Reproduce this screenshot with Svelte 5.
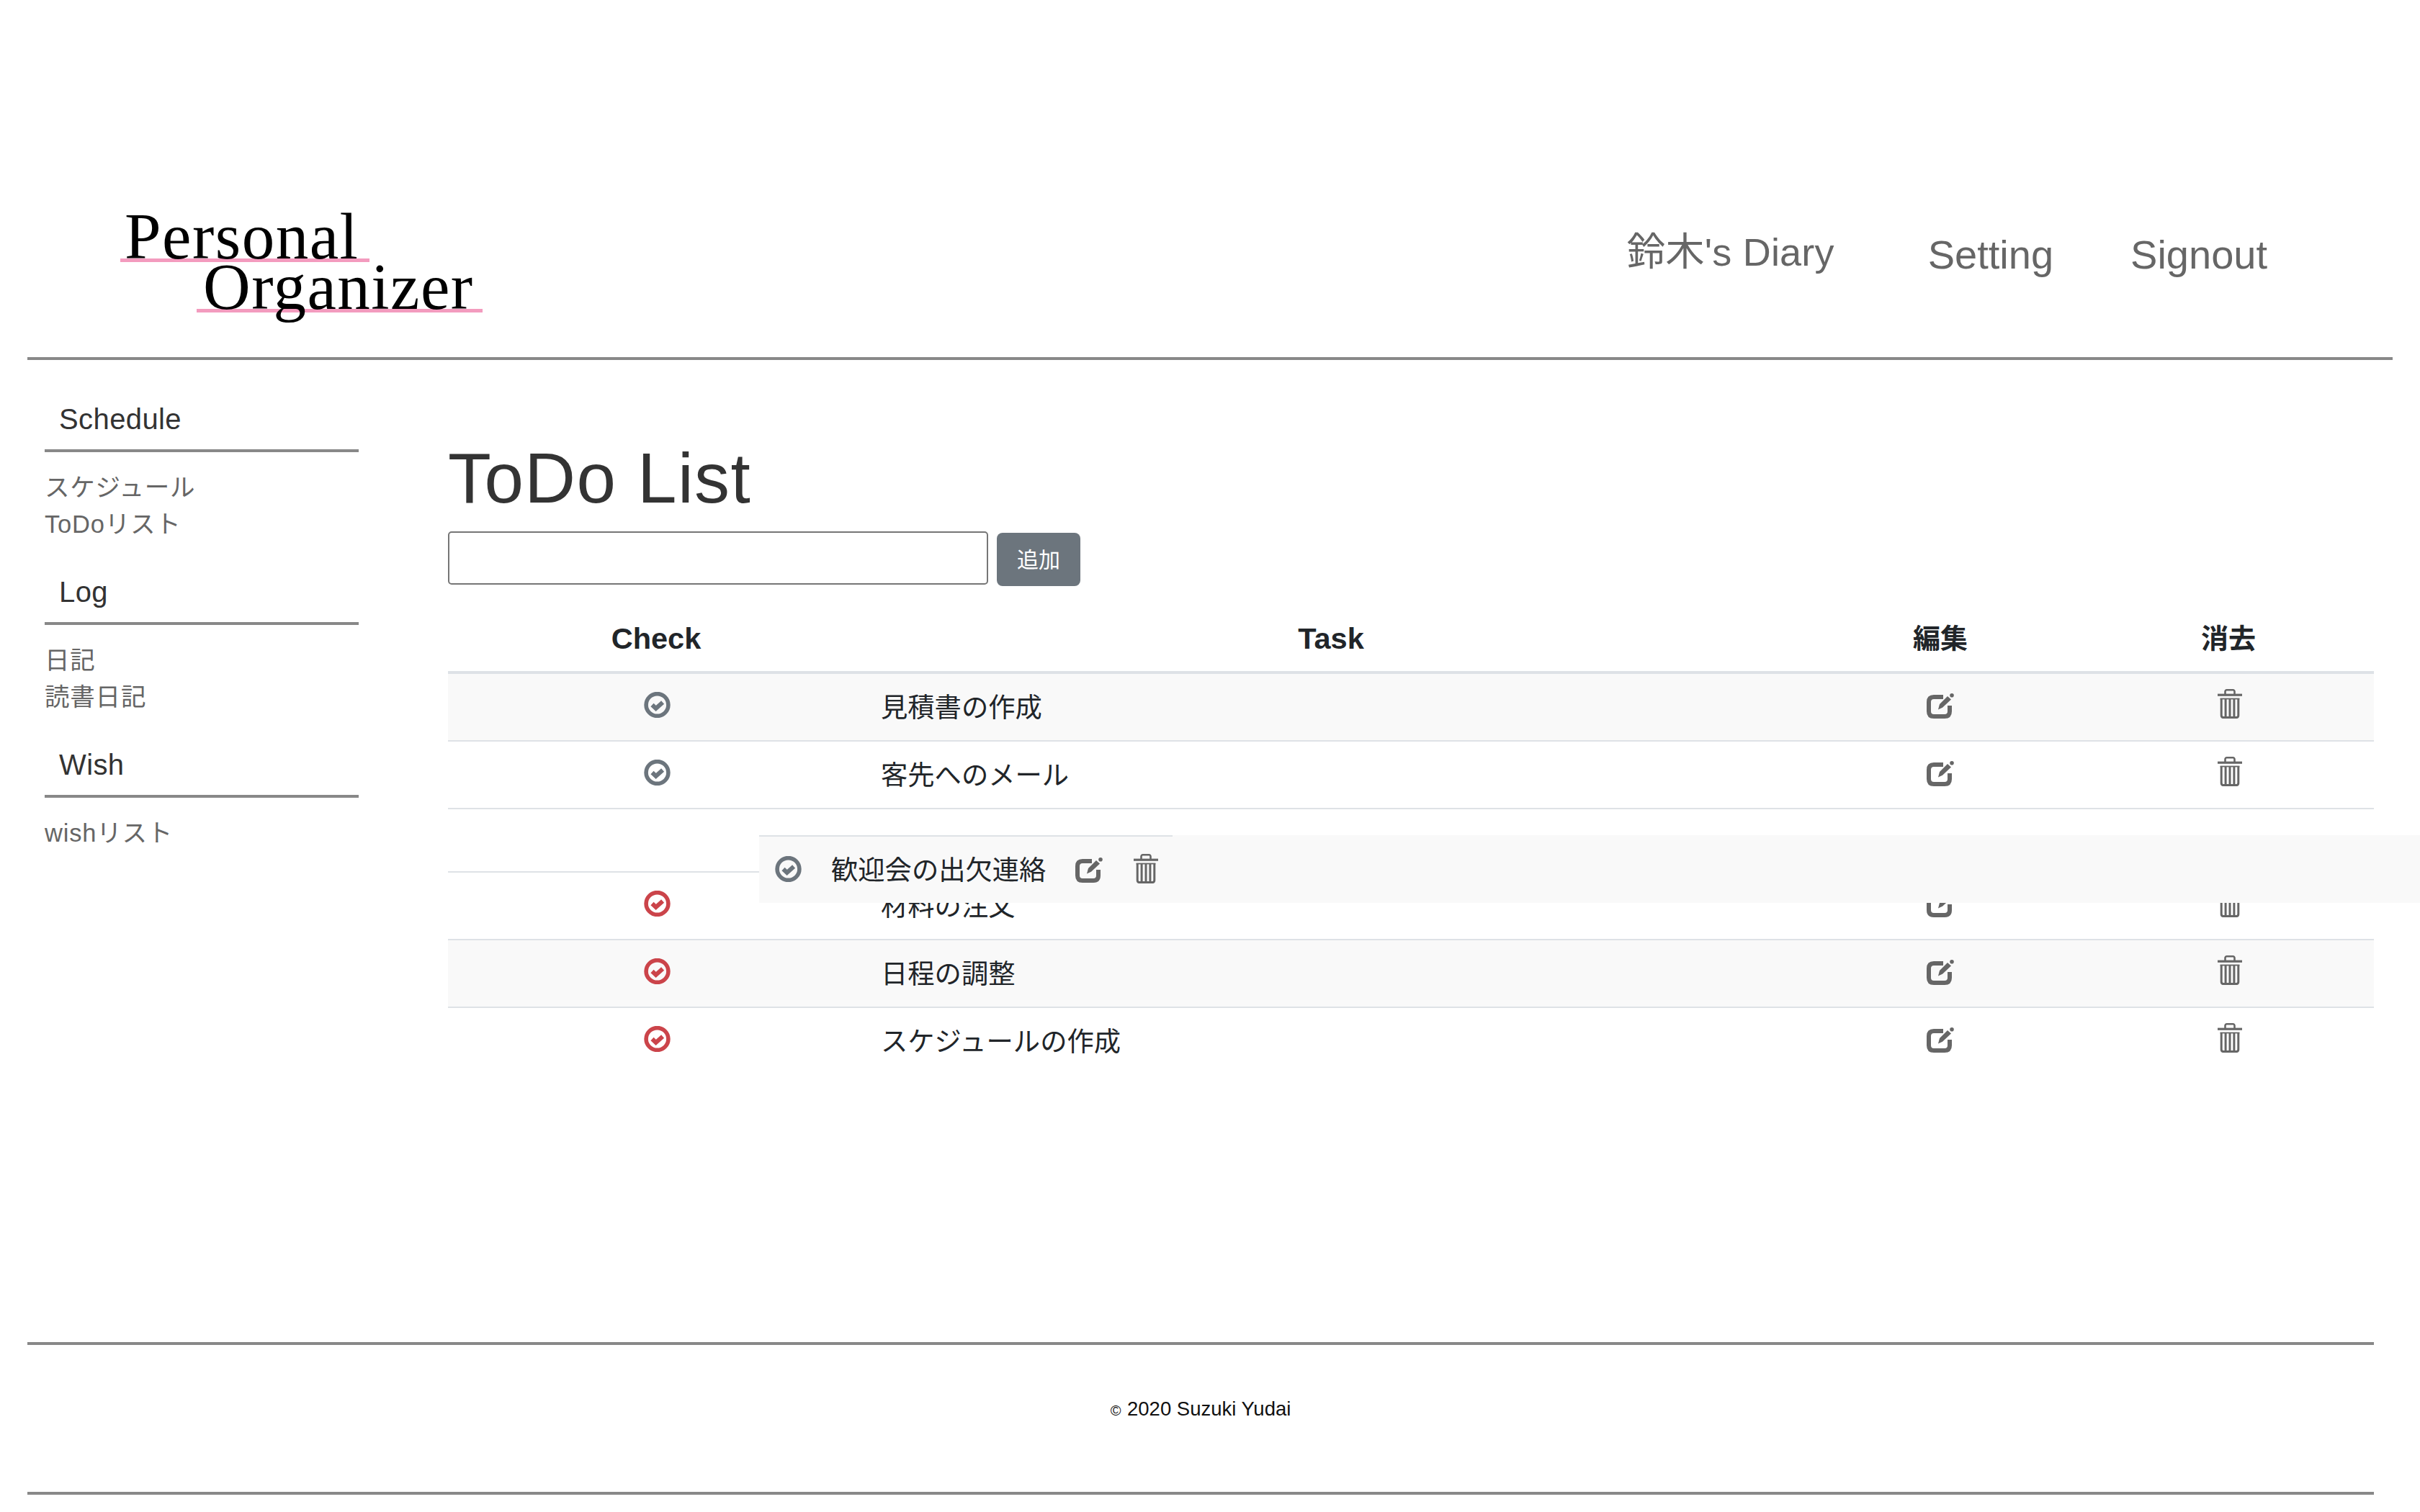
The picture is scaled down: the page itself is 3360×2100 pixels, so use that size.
<script>
  const rows = [
    { task: "見積書の作成", done: false, striped: true },
    { task: "客先へのメール", done: false, striped: false },
    { placeholder: true },
    { task: "材料の注文", done: true, striped: false },
    { task: "日程の調整", done: true, striped: true },
    { task: "スケジュールの作成", done: true, striped: false },
  ];

  const menu = [
    { title: "Schedule", links: ["スケジュール", "ToDoリスト"] },
    { title: "Log", links: ["日記", "読書日記"] },
    { title: "Wish", links: ["wishリスト"] },
  ];
</script>

{#snippet checkIcon(done)}
  <svg class="icon check" class:done viewBox="0 0 37 36" width="37" height="36">
    <circle cx="18.5" cy="18" r="15.4" fill="none" stroke="currentColor" stroke-width="5.6" />
    <path d="M11.5 18l5.2 5 9.4-8.4" fill="none" stroke="currentColor" stroke-width="6" />
  </svg>
{/snippet}

{#snippet editIcon()}
  <svg class="icon edit" viewBox="0 0 38 35" width="38" height="35">
    <path d="M23 5H10Q3 5 3 12V25Q3 32 10 32H25Q32 32 32 25V17" fill="none" stroke="currentColor" stroke-width="6" />
    <path d="M16 22.5l2-7.5L29 4l5 4.6L22 19.8z" fill="currentColor" />
    <circle cx="35" cy="2.8" r="2.8" fill="currentColor" />
  </svg>
{/snippet}

{#snippet trashIcon()}
  <svg class="icon trash" viewBox="0 0 34 41" width="34" height="41">
    <path d="M10.5 7.5V3.5a2.2 2.2 0 0 1 2.2-2.2h8.6a2.2 2.2 0 0 1 2.2 2.2v4" fill="none" stroke="currentColor" stroke-width="2.6" />
    <rect x="0" y="6.6" width="34" height="3.2" fill="currentColor" />
    <path d="M5.2 13v23.6q0 3 3 3h17.6q3 0 3-3V13M11.1 13v26M17 13v26M22.9 13v26" fill="none" stroke="currentColor" stroke-width="3" />
    <rect x="3.6" y="12.6" width="26.8" height="1.8" fill="currentColor" />
  </svg>
{/snippet}

<div class="page">
  <header>
    <div class="logo">
      <span class="first">Personal</span>
      <span class="second">Organizer</span>
    </div>
    <nav>
      <a class="diary" href="#diary">鈴木's Diary</a>
      <a class="setting" href="#setting">Setting</a>
      <a class="signout" href="#signout">Signout</a>
    </nav>
  </header>

  <main>
    <aside>
      {#each menu as section}
        <section>
          <h2>{section.title}</h2>
          <ul>
            {#each section.links as link}
              <li><a href="#link">{link}</a></li>
            {/each}
          </ul>
        </section>
      {/each}
    </aside>

    <div class="content">
      <h1>ToDo List</h1>
      <form>
        <input type="text" />
        <button type="button">追加</button>
      </form>
      <table>
        <colgroup>
          <col class="c1" />
          <col class="c2" />
          <col class="c3" />
          <col class="c4" />
        </colgroup>
        <thead>
          <tr>
            <th class="latin">Check</th>
            <th class="latin">Task</th>
            <th>編集</th>
            <th>消去</th>
          </tr>
        </thead>
        <tbody>
          {#each rows as row}
            {#if row.placeholder}
              <tr class="placeholder"><td colspan="4"></td></tr>
            {:else}
              <tr class:striped={row.striped}>
                <td class="center">{@render checkIcon(row.done)}</td>
                <td class="task">{row.task}</td>
                <td class="center">{@render editIcon()}</td>
                <td class="center">{@render trashIcon()}</td>
              </tr>
            {/if}
          {/each}
        </tbody>
      </table>
    </div>
  </main>

  <footer><small>©</small> 2020 Suzuki Yudai</footer>

  <!-- row being dragged by the sortable -->
  <div class="dragging">
    <div class="drag-cells">
      {@render checkIcon(false)}
      <span class="drag-task">歓迎会の出欠連絡</span>
      {@render editIcon()}
      {@render trashIcon()}
    </div>
  </div>
</div>

<style>
  :global(body) {
    margin: 0;
    background: #fff;
  }

  .page {
    position: relative;
    width: 3360px;
    height: 2100px;
    overflow: hidden;
    font-family: "Liberation Sans", "Noto Sans CJK JP", sans-serif;
  }

  a {
    color: inherit;
    text-decoration: none;
  }

  header {
    display: flex;
    box-sizing: border-box;
    height: 500px;
    margin: 0 38px;
    padding: 294px 174px 0 129px;
    border-bottom: 4px solid #888;
  }

  .logo {
    font-family: "Liberation Serif", serif;
    font-size: 91px;
    letter-spacing: 1.5px;
    line-height: 70px;
    color: #000;
  }

  .logo span {
    display: block;
    box-sizing: border-box;
    background: linear-gradient(#f39bbe, #f39bbe) no-repeat bottom / 100% 5px;
  }

  .first {
    width: 346px;
    padding-left: 6px;
  }

  .second {
    width: 397px;
    margin-left: 106px;
    padding-left: 9px;
  }

  nav {
    display: flex;
    align-items: flex-start;
    margin-left: auto;
    margin-top: 30px;
    font-size: 56px;
    line-height: 60px;
    color: #666;
  }

  .diary {
    margin-top: -4px;
    font-size: 54px;
    letter-spacing: 0.2px;
  }

  .setting {
    margin-left: 130px;
  }

  .signout {
    margin-left: 107px;
  }

  main {
    display: flex;
    height: 1364px;
  }

  aside {
    box-sizing: border-box;
    width: 436px;
    margin-left: 62px;
    padding-top: 40px;
  }

  section {
    height: 240px;
  }

  h2 {
    box-sizing: border-box;
    height: 88px;
    margin: 0;
    padding: 12px 0 0 20px;
    border-bottom: 4px solid #888;
    font-size: 40px;
    font-weight: 400;
    letter-spacing: 0.4px;
    line-height: 60px;
    color: #333;
  }

  ul {
    margin: 24px 0 0;
    padding: 0;
    list-style: none;
    font-size: 34.5px;
    letter-spacing: 0.8px;
    line-height: 51px;
    color: #666;
  }

  .content {
    width: 2676px;
    margin-left: 124px;
    padding-top: 109px;
  }

  h1 {
    margin: 0 0 19px;
    font-size: 98px;
    font-weight: 400;
    letter-spacing: 1.4px;
    line-height: 110px;
    color: #333;
  }

  form {
    display: flex;
    align-items: flex-start;
    gap: 12px;
  }

  input {
    box-sizing: border-box;
    width: 750px;
    height: 74px;
    padding: 0 8px;
    border: 2px solid #767676;
    border-radius: 5px;
    background: #fff;
  }

  button {
    box-sizing: border-box;
    width: 116px;
    height: 74px;
    margin-top: 2px;
    padding: 0 0 4px;
    border: 0;
    border-radius: 8px;
    background: #6c757d;
    color: #fff;
    font-family: inherit;
    font-size: 30px;
  }

  table {
    width: 2674px;
    margin-top: 24px;
    border-collapse: separate;
    border-spacing: 0;
    table-layout: fixed;
    font-size: 37.3px;
    color: #212529;
  }

  .c1 {
    width: 578px;
  }

  .c2 {
    width: 1296px;
  }

  .c3 {
    width: 396px;
  }

  .c4 {
    width: 404px;
  }

  th {
    box-sizing: border-box;
    height: 98px;
    padding: 19px 0 15px;
    border-bottom: 4px solid #dee2e6;
    font-size: 38px;
    font-weight: 700;
    line-height: 60px;
    text-align: center;
  }

  th.latin {
    font-size: 41.5px;
  }

  td {
    box-sizing: border-box;
    height: 94px;
    padding: 0;
    border-top: 2px solid #dee2e6;
    vertical-align: middle;
  }

  tbody tr:first-child td {
    height: 92px;
    border-top: 0;
  }

  .placeholder td {
    height: 88px;
  }

  .striped td {
    background: #f9f9f9;
  }

  .center {
    text-align: center;
  }

  .task {
    padding: 0 0 5px 23px;
  }

  .icon {
    display: block;
    margin-left: auto;
    margin-right: auto;
  }

  .check {
    margin-bottom: 6px;
    color: #6c757d;
  }

  td .check {
    transform: translateX(1px);
  }

  .check.done {
    color: #cb444a;
  }

  .edit {
    margin-bottom: 3px;
    color: #666;
  }

  .trash {
    margin-bottom: 9px;
    color: #666;
  }

  td .trash {
    transform: translateX(2px);
  }

  footer {
    box-sizing: border-box;
    height: 212px;
    margin: 0 64px 0 38px;
    padding-top: 69px;
    border-top: 4px solid #888;
    border-bottom: 4px solid #888;
    font-size: 27.5px;
    line-height: 40px;
    color: #111;
    text-align: center;
  }

  small {
    font-size: 20px;
    margin-right: 1px;
  }

  .dragging {
    position: absolute;
    top: 1160px;
    left: 1054px;
    right: 0;
    height: 94px;
    background: #f9f9f9;
    font-size: 37.3px;
    color: #212529;
  }

  .drag-cells {
    display: flex;
    align-items: center;
    box-sizing: border-box;
    width: 574px;
    height: 94px;
    padding-left: 22px;
    border-top: 2px solid #dee2e6;
  }

  .drag-cells .icon {
    flex: none;
    margin-left: 0;
    margin-right: 0;
  }

  .drag-cells .check {
    margin-bottom: 2px;
  }

  .drag-cells .edit {
    margin-bottom: 0;
  }

  .drag-cells .trash {
    margin-bottom: 4px;
    margin-left: 43px;
  }

  .drag-task {
    flex: none;
    width: 339px;
    margin-left: 41px;
    padding-bottom: 4px;
  }
</style>
